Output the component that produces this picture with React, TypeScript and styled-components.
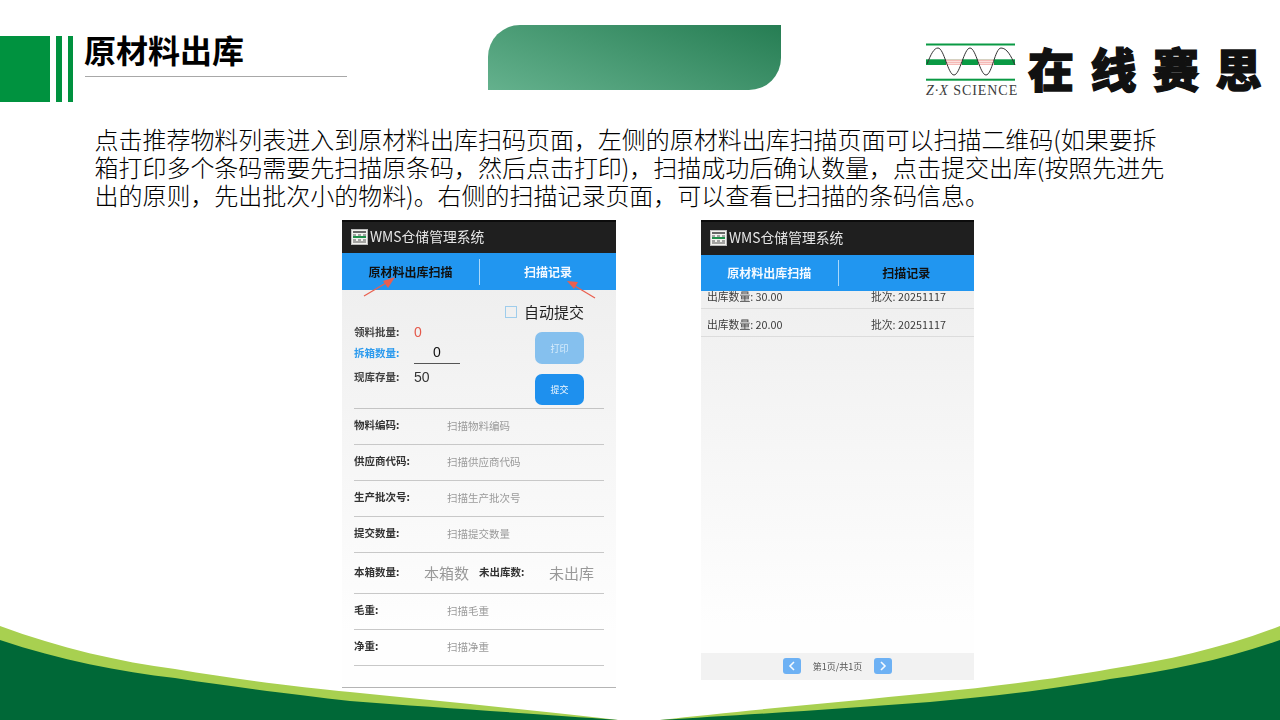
import styled, { createGlobalStyle } from "styled-components";

const GlobalStyle = createGlobalStyle`
  html, body {
    margin: 0;
    padding: 0;
    background: #fff;
    font-family: "Noto Sans CJK SC", "Noto Sans", sans-serif;
  }
`;

const Slide = styled.div`
  position: relative;
  width: 1280px;
  height: 720px;
  overflow: hidden;
  background: #fff;
`;

const Wave = styled.svg`
  position: absolute;
  left: 0;
  bottom: 0;
  width: 1280px;
  height: 100px;
`;

const Content = styled.div`
  position: relative;
`;

const Header = styled.header`
  display: flex;
  align-items: flex-start;
  height: 102px;
`;

const GreenBlock = styled.div`
  width: 50px;
  height: 66px;
  margin-top: 36px;
  background: #00923f;
`;

const GreenBar = styled.div<{ $width: number }>`
  width: ${({ $width }) => $width}px;
  height: 66px;
  margin-top: 36px;
  margin-left: 6px;
  background: #00923f;
`;

const Title = styled.h1`
  width: 262px;
  margin: 29px 0 0 12px;
  padding: 0 0 7px;
  box-sizing: content-box;
  border-bottom: 1px solid #a8a8a8;
  color: #000;
  font-size: 32px;
  font-weight: 700;
  line-height: 40px;
  text-indent: -1px;
  white-space: nowrap;
`;

const Banner = styled.div`
  width: 293px;
  height: 65px;
  margin: 25px 0 0 141px;
  border-radius: 32px 0 32px 0;
  background: linear-gradient(20deg, #64b18d, #267d53);
`;

const Brand = styled.div`
  display: flex;
  align-items: flex-start;
  margin: 42px 0 0 145px;
`;

const BrandMark = styled.div`
  display: flex;
  flex-direction: column;
  width: 92px;
`;

const BrandLatin = styled.div`
  color: #3c3c3c;
  font-family: "Liberation Serif", serif;
  font-size: 14px;
  line-height: 15px;
  letter-spacing: 0.95px;
  white-space: nowrap;
`;

const BrandName = styled.div`
  margin: -8px 0 0 10px;
  color: #111;
  font-size: 46px;
  font-weight: 900;
  line-height: 66px;
  letter-spacing: 16.5px;
  white-space: nowrap;
  -webkit-text-stroke: 1.4px #111;
`;

const Intro = styled.p`
  margin: 23px 0 11px 94.5px;
  color: #000;
  font-size: 24px;
  font-weight: 300;
  line-height: 28px;
  letter-spacing: -0.03px;
  white-space: nowrap;
`;

const Screens = styled.div`
  display: flex;
  align-items: flex-start;
  gap: 85px;
  padding-left: 342px;
`;

const Phone = styled.div<{ $width: number; $height: number }>`
  position: relative;
  display: flex;
  flex-direction: column;
  width: ${({ $width }) => $width}px;
  height: ${({ $height }) => $height}px;
  overflow: hidden;
  background: linear-gradient(#ececec, #fefefe 88%);
  filter: blur(0.45px);
`;

const AppBar = styled.div<{ $height: number }>`
  display: flex;
  flex: none;
  align-items: center;
  gap: 2px;
  height: ${({ $height }) => $height}px;
  padding: 0 0 2px 9px;
  box-sizing: border-box;
  border-top: 2px solid #0c0c0c;
  background: #1f1f1f;
  color: #e6e6e6;
  font-size: 13.8px;
  line-height: 1;
`;

const Tabs = styled.div<{ $height: number }>`
  display: grid;
  flex: none;
  grid-template-columns: 1fr 1fr;
  align-items: center;
  height: ${({ $height }) => $height}px;
  background: #2196f0;
`;

const Tab = styled.div<{ $active?: boolean }>`
  display: flex;
  align-items: center;
  justify-content: center;
  height: 26px;
  padding-bottom: 1px;
  box-sizing: border-box;
  color: ${({ $active }) => ($active ? "#111" : "#f4f9ff")};
  font-size: 12px;
  font-weight: 700;

  & + & {
    border-left: 1px solid #a9d8fb;
  }
`;

const Arrows = styled.svg`
  position: absolute;
  top: 0;
  left: 0;
  width: 274px;
  height: 90px;
`;

const StatusPanel = styled.div`
  display: flex;
  flex: none;
  justify-content: space-between;
  height: 118px;
  margin: 0 12px;
  border-bottom: 1px solid #c4c4c4;
  padding-right: 20px;
`;

const Stats = styled.div`
  display: flex;
  flex-direction: column;
  padding-top: 32px;
`;

const StatRow = styled.div<{ $height: number }>`
  display: grid;
  grid-template-columns: 60px 46px;
  align-items: center;
  height: ${({ $height }) => $height}px;
`;

const StatLabel = styled.span<{ $accent?: boolean }>`
  color: ${({ $accent }) => ($accent ? "#2d9bee" : "#444")};
  font-size: 10.5px;
  font-weight: 700;
  line-height: 1;
`;

const StatValue = styled.span<{ $danger?: boolean }>`
  color: ${({ $danger }) => ($danger ? "#e4584a" : "#333")};
  font-family: "Liberation Sans", sans-serif;
  font-size: 14px;
  line-height: 1;
`;

const QtyInput = styled.span`
  align-self: stretch;
  border-bottom: 1px solid #555;
  color: #111;
  font-family: "Liberation Sans", sans-serif;
  font-size: 14px;
  line-height: 21px;
  text-align: center;
`;

const Actions = styled.div`
  display: flex;
  flex-direction: column;
  align-items: flex-end;
  width: 79px;
  padding-top: 16px;
`;

const AutoSubmit = styled.label`
  display: flex;
  flex: none;
  align-items: center;
  gap: 7px;
  width: 79px;
  height: 12px;
  padding-bottom: 1px;
  box-sizing: border-box;
  margin-bottom: 14px;
  color: #222;
  font-size: 15px;
  line-height: 1;
  white-space: nowrap;
`;

const CheckBox = styled.span`
  flex: none;
  width: 10px;
  height: 10px;
  border: 1px solid #9fcdec;
`;

const ActionButton = styled.button<{ $disabled?: boolean; $height: number }>`
  flex: none;
  width: 49px;
  height: ${({ $height }) => $height}px;
  padding: 0;
  border: 0;
  border-radius: 7px;
  background: ${({ $disabled }) => ($disabled ? "#85c0ee" : "#1e90ee")};
  color: ${({ $disabled }) => ($disabled ? "#d8ecfb" : "#f2f9ff")};
  font-family: inherit;
  font-size: 9px;
  line-height: 1;

  & + & {
    margin-top: 10px;
  }
`;

const Field = styled.div<{ $height?: number }>`
  display: flex;
  flex: none;
  align-items: center;
  height: ${({ $height }) => $height ?? 35}px;
  margin: 0 12px;
  border-bottom: 1px solid #c8c8c8;
`;

const FieldLabel = styled.span<{ $width?: number }>`
  flex: none;
  width: ${({ $width }) => $width ?? 93}px;
  margin-top: -2px;
  color: #333;
  font-size: 10.5px;
  font-weight: 700;
  line-height: 1;
`;

const FieldHint = styled.span`
  color: #9a9a9a;
  font-size: 10.5px;
  line-height: 1;
`;

const FieldHintLarge = styled.span<{ $width: number }>`
  flex: none;
  width: ${({ $width }) => $width}px;
  margin-top: -1px;
  color: #999;
  font-size: 15px;
  line-height: 1;
`;

const PhoneFoot = styled.div`
  margin-top: auto;
  height: 1px;
  background: #b4b4b4;
`;

const RecordList = styled.div`
  flex: 1;
  min-height: 0;
  margin-top: -10px;
`;

const Record = styled.div`
  display: grid;
  grid-template-columns: 164px 1fr;
  align-items: center;
  height: 28px;
  padding: 3px 0 0 6px;
  box-sizing: border-box;
  border-bottom: 1px solid #dcdcdc;
  color: #3c3c3c;
  font-size: 10.8px;
  line-height: 1;
`;

const Pager = styled.div`
  display: flex;
  flex: none;
  align-items: center;
  justify-content: center;
  gap: 12px;
  height: 27px;
  padding-bottom: 1px;
  box-sizing: border-box;
  background: #f2f2f2;
  color: #555;
  font-size: 9px;
  line-height: 1;
`;

const PageButton = styled.span`
  display: flex;
  align-items: center;
  justify-content: center;
  width: 18px;
  height: 16px;
  border-radius: 3px;
  background: #6db1f4;
`;

const AppIcon = () => (
  <svg width="17" height="16" viewBox="0 0 17 16">
    <rect x="0.5" y="0.5" width="16" height="15" fill="#f2f2ee" stroke="#bbb" />
    <rect x="2" y="2" width="13" height="2" fill="#666" />
    <rect x="2" y="7" width="13" height="2" fill="#1e8f4a" />
    <path d="M2 6h3M7 6h3M12 6h3M2 11h3M7 11h3M12 11h3" stroke="#888" strokeWidth="1.5" />
    <path d="M2 13h13" stroke="#555" />
  </svg>
);

const Chevron = ({ left }: { left?: boolean }) => (
  <svg width="8" height="10" viewBox="0 0 8 10">
    <path
      d={left ? "M6 1 2 5l4 4" : "M2 1l4 4-4 4"}
      fill="none"
      stroke="#f4faff"
      strokeWidth="1.6"
    />
  </svg>
);

const ZxMark = () => (
  <svg width="92" height="41" viewBox="0 0 92 41">
    <rect x="0" y="1.5" width="89" height="2" fill="#0a9a44" />
    <rect x="0" y="17.3" width="89" height="5.7" fill="#0a9a44" />
    <rect x="20" y="17.3" width="16" height="5.7" fill="#fff" />
    <rect x="52" y="17.3" width="16" height="5.7" fill="#fff" />
    <path
      d="M20 18.2h16M20 20.2h16M20 22.2h16M52 18.2h16M52 20.2h16M52 22.2h16"
      stroke="#ef8f8a"
      strokeWidth="0.9"
    />
    <rect x="0" y="36.7" width="89" height="2" fill="#0a9a44" />
    <path
      d="M1 22C5 12 8 6 12 6c6 0 10 27 16 27s10-27 16-27 10 27 16 27 9-27 15-27 10 8 14 17"
      fill="none"
      stroke="#333"
      strokeWidth="1"
    />
  </svg>
);

const fields = [
  { label: "物料编码:", hint: "扫描物料编码" },
  { label: "供应商代码:", hint: "扫描供应商代码" },
  { label: "生产批次号:", hint: "扫描生产批次号" },
  { label: "提交数量:", hint: "扫描提交数量" },
];

const weights = [
  { label: "毛重:", hint: "扫描毛重" },
  { label: "净重:", hint: "扫描净重" },
];

const records = ["30.00", "20.00"];

export default function App() {
  return (
    <Slide>
      <GlobalStyle />
      <Wave viewBox="0 620 1280 100">
        <path
          d="M0 626C60 648 120 662 175 669 240 680 300 687 350 692 440 701 540 711 618 720H0Z"
          fill="#a8d050"
        />
        <path
          d="M0 640C60 660 120 672 175 678 240 688 300 695 350 701 440 708 540 714 618 720H0Z"
          fill="#006837"
        />
        <path
          d="M660 720C740 711 840 702 930 693 1000 686 1060 678 1110 669 1170 660 1225 647 1280 626V720Z"
          fill="#a8d050"
        />
        <path
          d="M660 720C740 715 840 709 930 702 1000 696 1060 688 1110 679 1170 671 1225 659 1280 640V720Z"
          fill="#006837"
        />
      </Wave>
      <Content>
        <Header>
          <GreenBlock />
          <GreenBar $width={6} />
          <GreenBar $width={5} />
          <Title>原材料出库</Title>
          <Banner />
          <Brand>
            <BrandMark>
              <ZxMark />
              <BrandLatin>
                <i>Z·X</i> SCIENCE
              </BrandLatin>
            </BrandMark>
            <BrandName>在线赛思</BrandName>
          </Brand>
        </Header>
        <Intro>
          点击推荐物料列表进入到原材料出库扫码页面，左侧的原材料出库扫描页面可以扫描二维码(如果要拆
          <br />
          箱打印多个条码需要先扫描原条码，然后点击打印)，扫描成功后确认数量，点击提交出库(按照先进先
          <br />
          出的原则，先出批次小的物料)。右侧的扫描记录页面，可以查看已扫描的条码信息。
        </Intro>
        <Screens>
          <Phone $width={274} $height={468}>
            <AppBar $height={33}>
              <AppIcon />
              WMS仓储管理系统
            </AppBar>
            <Tabs $height={37}>
              <Tab $active>原材料出库扫描</Tab>
              <Tab>扫描记录</Tab>
            </Tabs>
            <StatusPanel>
              <Stats>
                <StatRow $height={20}>
                  <StatLabel>领料批量:</StatLabel>
                  <StatValue $danger>0</StatValue>
                </StatRow>
                <StatRow $height={22}>
                  <StatLabel $accent>拆箱数量:</StatLabel>
                  <QtyInput>0</QtyInput>
                </StatRow>
                <StatRow $height={26}>
                  <StatLabel>现库存量:</StatLabel>
                  <StatValue>50</StatValue>
                </StatRow>
              </Stats>
              <Actions>
                <AutoSubmit>
                  <CheckBox />
                  自动提交
                </AutoSubmit>
                <ActionButton $disabled $height={32}>
                  打印
                </ActionButton>
                <ActionButton $height={31}>提交</ActionButton>
              </Actions>
            </StatusPanel>
            {fields.map((field) => (
              <Field key={field.label}>
                <FieldLabel>{field.label}</FieldLabel>
                <FieldHint>{field.hint}</FieldHint>
              </Field>
            ))}
            <Field $height={40}>
              <FieldLabel $width={70}>本箱数量:</FieldLabel>
              <FieldHintLarge $width={55}>本箱数</FieldHintLarge>
              <FieldLabel $width={70}>未出库数:</FieldLabel>
              <FieldHintLarge $width={45}>未出库</FieldHintLarge>
            </Field>
            {weights.map((field) => (
              <Field key={field.label}>
                <FieldLabel>{field.label}</FieldLabel>
                <FieldHint>{field.hint}</FieldHint>
              </Field>
            ))}
            <PhoneFoot />
            <Arrows viewBox="0 0 274 90">
              <path d="M22 76 44 63" stroke="#ea5f4e" strokeWidth="1.2" />
              <path d="M53 57 41 61l5 7Z" fill="#ea5f4e" />
              <path d="M253 78 233 66" stroke="#ea5f4e" strokeWidth="1.2" />
              <path d="M225 61 236 62l-4 7Z" fill="#ea5f4e" />
            </Arrows>
          </Phone>
          <Phone $width={273} $height={460}>
            <AppBar $height={35}>
              <AppIcon />
              WMS仓储管理系统
            </AppBar>
            <Tabs $height={36}>
              <Tab>原材料出库扫描</Tab>
              <Tab $active>扫描记录</Tab>
            </Tabs>
            <RecordList>
              {records.map((qty) => (
                <Record key={qty}>
                  <span>出库数量: {qty}</span>
                  <span>批次: 20251117</span>
                </Record>
              ))}
            </RecordList>
            <Pager>
              <PageButton>
                <Chevron left />
              </PageButton>
              第1页/共1页
              <PageButton>
                <Chevron />
              </PageButton>
            </Pager>
          </Phone>
        </Screens>
      </Content>
    </Slide>
  );
}
